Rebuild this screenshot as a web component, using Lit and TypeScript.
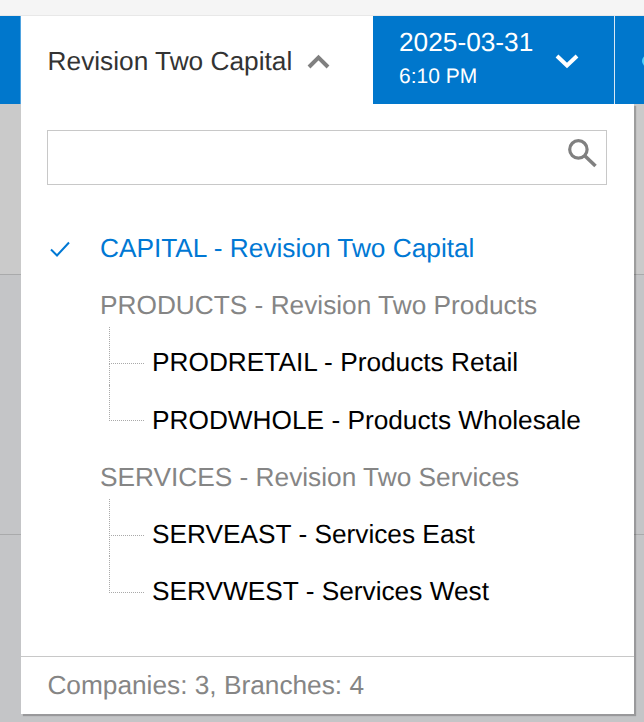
import { LitElement, html, css } from "lit";
import { customElement } from "lit/decorators.js";

@customElement("app-root")
export class AppRoot extends LitElement {
  static styles = css`
    :host {
      display: block;
      position: relative;
      width: 644px;
      height: 722px;
      overflow: hidden;
      background: #c4c5c7;
      font-family: "Liberation Sans", Arial, sans-serif;
      text-rendering: geometricPrecision;
    }
    .top {
      height: 15px;
      background: #f5f5f5;
      border-bottom: 1px solid #e8e8e8;
    }
    .bar {
      display: flex;
      height: 88px;
      background: #0077cc;
    }
    .spacer { width: 21px; flex: none; box-sizing: border-box; border-right: 1px solid #4fa3e0; }
    .company {
      width: 352px;
      flex: none;
      box-sizing: border-box;
      background: #fff;
      display: flex;
      align-items: center;
      padding: 2px 0 0 26.6px;
      gap: 14px;
      font-size: 26.25px;
      color: #333;
      height: 88px;
    }
    .company svg { margin-top: -2px; }
    .date {
      width: 242px;
      flex: none;
      box-sizing: border-box;
      display: flex;
      align-items: center;
      justify-content: space-between;
      padding: 0 34px 0 26px;
      color: #fff;
      border-right: 1px solid #d8e8f4;
    }
    .date-main { font-size: 26.25px; line-height: 30px; }
    .date-sub { font-size: 21px; line-height: 26px; margin-top: 7px; }
    .date-text { margin-top: -3px; }
    .next { flex: 1; overflow: hidden; position: relative; }
    .badge {
      position: absolute;
      left: 27px;
      top: 39px;
      width: 12px;
      height: 12px;
      border-radius: 50%;
      background: #4dd2ff;
    }
    .row1 { height: 170px; border-bottom: 1px solid #a9aaab; background: #cacaca; }
    .row2 { height: 259px; border-bottom: 1px solid #a9aaab; }
    .panel {
      position: absolute;
      left: 21px;
      top: 104px;
      width: 613px;
      height: 610px;
      background: #fff;
      box-shadow: 2px 2px 1px rgba(0, 0, 0, 0.22);
      display: flex;
      flex-direction: column;
    }
    .search {
      margin: 26px 27px 0 26px;
      height: 55px;
      box-sizing: border-box;
      border: 1px solid #c8c8c8;
      display: flex;
      align-items: center;
      justify-content: flex-end;
      padding-right: 9px;
    }
    .search svg { margin-bottom: 7px; }
    .tree { flex: 1; padding-top: 35px; }
    .item {
      height: 57.2px;
      display: flex;
      align-items: center;
      font-size: 26.25px;
      white-space: nowrap;
    }
    .check { width: 79px; flex: none; display: flex; padding-left: 29px; box-sizing: border-box; }
    .current { color: #0078d4; }
    .group { color: #858585; padding-left: 79px; }
    .leaf { color: #000; padding-left: 131px; position: relative; }
    .leaf::before {
      content: "";
      position: absolute;
      left: 88px;
      top: -7px;
      width: 34px;
      height: calc(50% + 7px);
      border-left: 1px dotted #a9a9a9;
      border-bottom: 1px dotted #a9a9a9;
    }
    .leaf.mid::after {
      content: "";
      position: absolute;
      left: 88px;
      top: 50%;
      height: calc(50% - 7px);
      border-left: 1px dotted #a9a9a9;
    }
    .footer {
      height: 58px;
      box-sizing: border-box;
      border-top: 1px solid #c8c8c8;
      padding-left: 26.4px;
      display: flex;
      align-items: center;
      font-size: 26.25px;
      color: #858585;
    }
  `;

  private leaf(text: string, mid: boolean) {
    return html`<div class="item leaf ${mid ? "mid" : ""}">${text}</div>`;
  }

  render() {
    return html`
      <div class="top"></div>
      <div class="bar">
        <div class="spacer"></div>
        <div class="company">
          <span>Revision Two Capital</span>
          <svg width="26" height="18" viewBox="0 0 26 18"><path d="M3 16 L12.5 6.5 L22 16" fill="none" stroke="#808080" stroke-width="4"/></svg>
        </div>
        <div class="date">
          <div class="date-text">
            <div class="date-main">2025-03-31</div>
            <div class="date-sub">6:10 PM</div>
          </div>
          <svg width="26" height="18" viewBox="0 0 26 18"><path d="M3 5 L13 14.5 L23 5" fill="none" stroke="#fff" stroke-width="4"/></svg>
        </div>
        <div class="next"><div class="badge"></div></div>
      </div>
      <div class="row1"></div>
      <div class="row2"></div>
      <div class="panel">
        <div class="search">
          <svg width="30" height="30" viewBox="0 0 30 30">
            <circle cx="11.4" cy="10.4" r="8.7" fill="none" stroke="#808080" stroke-width="3.2"/>
            <path d="M17.5 16.5 L28.5 27" fill="none" stroke="#808080" stroke-width="3.6"/>
          </svg>
        </div>
        <div class="tree">
          <div class="item current">
            <div class="check">
              <svg width="20" height="16" viewBox="0 0 20 16"><path d="M1 8.5 L7 14.5 L19 1.5" fill="none" stroke="#0078d4" stroke-width="2"/></svg>
            </div>
            CAPITAL - Revision Two Capital
          </div>
          <div class="item group">PRODUCTS - Revision Two Products</div>
          ${this.leaf("PRODRETAIL - Products Retail", true)}
          ${this.leaf("PRODWHOLE - Products Wholesale", false)}
          <div class="item group">SERVICES - Revision Two Services</div>
          ${this.leaf("SERVEAST - Services East", true)}
          ${this.leaf("SERVWEST - Services West", false)}
        </div>
        <div class="footer">Companies: 3, Branches: 4</div>
      </div>
    `;
  }
}
